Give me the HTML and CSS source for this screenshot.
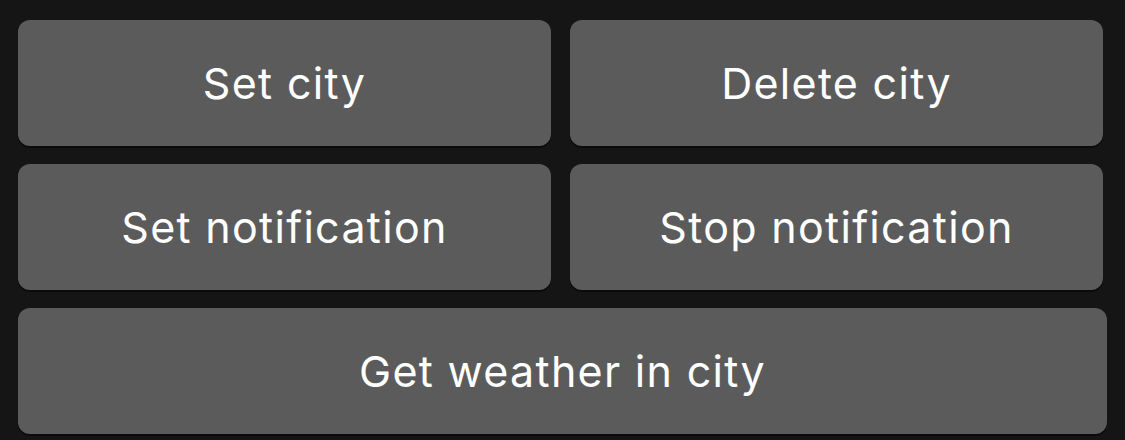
FILE: index.html
```html
<!DOCTYPE html>
<html>
<head>
<meta charset="utf-8">
<link rel="stylesheet" href="styles.css">
</head>
<body>
<div class="keyboard">
  <div class="row row-pair">
    <button class="key">Set city</button>
    <button class="key">Delete city</button>
  </div>
  <div class="row row-pair">
    <button class="key">Set notification</button>
    <button class="key">Stop notification</button>
  </div>
  <div class="row">
    <button class="key">Get weather in city</button>
  </div>
</div>
</body>
</html>
```
FILE: styles.css
```css
html, body {
  margin: 0;
  padding: 0;
  background: #151515;
}
body {
  width: 1125px;
  height: 440px;
  overflow: hidden;
}
.keyboard {
  display: flex;
  flex-direction: column;
  gap: 18px;
  padding: 20px 18px 0 18px;
}
.row {
  display: flex;
  gap: 19px;
}
.row-pair {
  padding-right: 4px;
}
.key {
  flex: 1;
  height: 126px;
  border: none;
  border-radius: 12px;
  background: #5b5b5b;
  box-shadow: 0 2px 0 #0b0b0b;
  color: #ffffff;
  font-family: Inter, "Noto Sans", sans-serif;
  font-size: 43px;
  letter-spacing: 1.3px;
  font-weight: 400;
  padding: 0;
  margin: 0;
  cursor: pointer;
}
```
